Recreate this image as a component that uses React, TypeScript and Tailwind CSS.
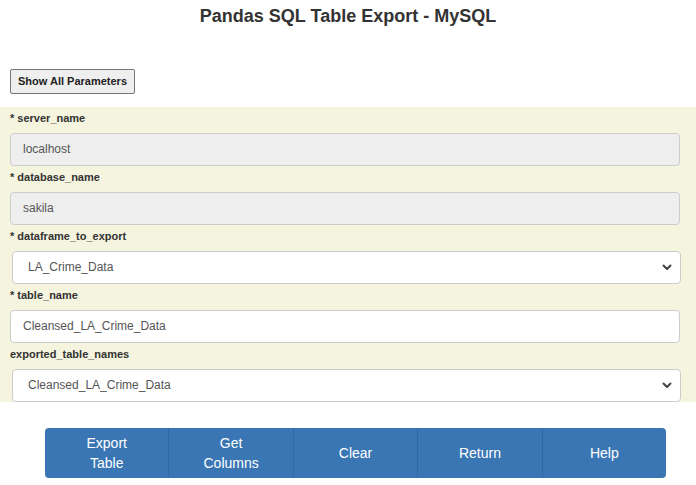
import React from "react";

const font = { fontFamily: '"Liberation Sans", Arial, sans-serif' };

function Chevron() {
  return (
    <svg width="12" height="12" viewBox="0 0 12 12" className="absolute right-[8px] top-1/2 -translate-y-1/2 pointer-events-none">
      <path d="M2.5 4.5 L6 8 L9.5 4.5" fill="none" stroke="#444" strokeWidth="2" strokeLinecap="round" strokeLinejoin="round" />
    </svg>
  );
}

function Label({ text, required }: { text: string; required?: boolean }) {
  return (
    <div className="pl-[10px] pt-[4px] pb-[7px] text-[11px] leading-[15px] font-bold text-[#333]">
      {required ? "* " : ""}
      {text}
    </div>
  );
}

function TextInput({ value, disabled }: { value: string; disabled?: boolean }) {
  return (
    <div className="pl-[10px] pr-[16px]">
      <input
        readOnly
        value={value}
        style={font}
        className={`block w-full h-[33px] rounded-[4px] border border-[#ccc] px-[12px] text-[12px] text-[#555] outline-none ${disabled ? "bg-[#eee]" : "bg-white"}`}
      />
    </div>
  );
}

function SelectInput({ value }: { value: string }) {
  return (
    <div className="pl-[12px] pr-[15px]">
      <div className="relative">
        <select
          value={value}
          onChange={() => {}}
          style={font}
          className="block w-full h-[33px] appearance-none rounded-[4px] border border-[#ccc] bg-white pl-[15px] pr-[24px] text-[12px] text-[#555] outline-none"
        >
          <option value={value}>{value}</option>
        </select>
        <Chevron />
      </div>
    </div>
  );
}

export default function App() {
  const buttons: React.ReactNode[] = [
    <>Export<br />Table</>,
    <>Get<br />Columns</>,
    "Clear",
    "Return",
    "Help",
  ];
  return (
    <div style={font} className="w-[696px] h-[485px] bg-white text-[#333] overflow-hidden">
      <h1 className="text-center text-[18px] leading-[22px] font-bold text-[#333] pt-[5px]">
        Pandas SQL Table Export - MySQL
      </h1>
      <div className="pl-[10px] mt-[41px]">
        <button
          style={font}
          className="h-[25px] w-[125px] rounded-[2px] border border-[#767676] bg-[#efefef] text-[11px] font-bold text-[#222]"
        >
          Show All Parameters
        </button>
      </div>
      <div className="mt-[13px] bg-[#f5f4df]">
        <Label text="server_name" required />
        <TextInput value="localhost" disabled />
        <Label text="database_name" required />
        <TextInput value="sakila" disabled />
        <Label text="dataframe_to_export" required />
        <SelectInput value="LA_Crime_Data" />
        <Label text="table_name" required />
        <TextInput value="Cleansed_LA_Crime_Data" />
        <Label text="exported_table_names" />
        <SelectInput value="Cleansed_LA_Crime_Data" />
      </div>
      <div className="ml-[45px] mt-[26px] w-[621px] h-[50px] flex rounded-[4px] overflow-hidden">
        {buttons.map((b, i) => (
          <button
            key={i}
            style={font}
            className={`flex-1 h-full bg-[#3a76b4] text-white text-[14px] leading-[20px] ${i > 0 ? "border-l border-[#2e6aa6]" : ""}`}
          >
            {b}
          </button>
        ))}
      </div>
    </div>
  );
}
